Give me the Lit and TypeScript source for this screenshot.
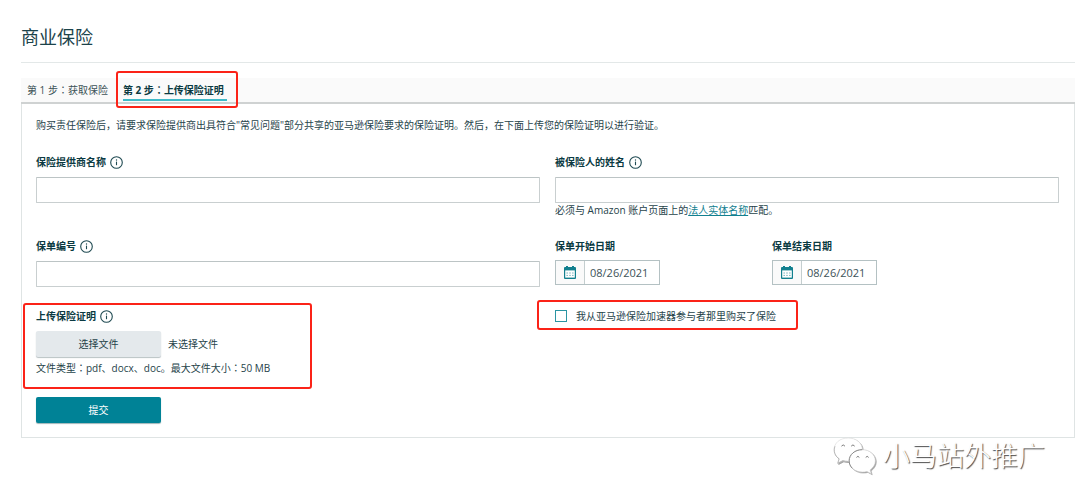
import { LitElement, html, css, svg } from "lit";
import { customElement, property, query, state } from "lit/decorators.js";

@customElement("info-icon")
class InfoIcon extends LitElement {
  static styles = css`
    :host { display: inline-flex; }
    .icon { display: block; width: 13px; height: 13px; }
  `;
  render() {
    return html`<svg class="icon" viewBox="0 0 13 13" fill="none" aria-hidden="true">
      <circle cx="6.5" cy="6.5" r="5.8" stroke="#1f4a52" stroke-width="1.1" />
      <circle cx="6.5" cy="4" r="0.7" fill="#1f4a52" />
      <path d="M6.5 5.6V9.2" stroke="#1f4a52" stroke-width="1.1" />
    </svg>`;
  }
}

@customElement("date-field")
class DateField extends LitElement {
  @property() label = "";
  @property() value = "";

  static styles = css`
    :host { display: block; }
    .label { display: block; height: 18px; line-height: 18px; margin-bottom: 5px; font-weight: 700; color: #0b3a42; }
    .box { display: flex; width: 105px; height: 25px; box-sizing: border-box; border: 1px solid #b4c1c3; background: #fff; }
    .pick { flex: none; width: 29px; padding: 0; border: 0; border-right: 1px solid #c4cecf; background: #fafafa; display: grid; place-items: center; }
    .icon { width: 12px; height: 13px; display: block; }
    .text { flex: 1; min-width: 0; border: 0; padding: 0 5px; background: none; font: inherit; font-size: 11px; color: #3c5257; outline: none; }
  `;
  render() {
    return html`
      <label class="label" for="date">${this.label}</label>
      <div class="box">
        <button class="pick" type="button" aria-label=${this.label}>
          <svg class="icon" viewBox="0 0 12 13" aria-hidden="true">
            <path d="M2 0h2v1h4V0h2v1h1a1 1 0 0 1 1 1v10a1 1 0 0 1-1 1H1a1 1 0 0 1-1-1V2a1 1 0 0 1 1-1h1z" fill="#12808f" />
            <rect x="1.2" y="4.4" width="9.6" height="7.2" fill="#fff" />
            <path d="M2.4 7h1.6M5.2 7h1.6M8 7h1.6M2.4 9.4h1.6M5.2 9.4h1.6M8 9.4h1.6" stroke="#7db9c1" stroke-width="1" />
          </svg>
        </button>
        <input class="text" id="date" type="text" .value=${this.value} />
      </div>`;
  }
}

@customElement("app-root")
class AppRoot extends LitElement {
  @state() private step = 2;
  @state() private fileName = "未选择文件";
  @query(".file") private fileInput!: HTMLInputElement;

  static styles = css`
    :host {
      display: block;
      position: relative;
      padding: 24px 5px 65px 21px;
      background: #fff;
      color: #26434a;
      font-family: "Open Sans", "Noto Sans CJK SC", sans-serif;
      font-size: 10px;
      line-height: 16px;
    }
    .title { margin: 0; padding-bottom: 12px; border-bottom: 1px solid #e3e8e8; font-size: 18px; line-height: 26px; font-weight: 400; color: #1c434b; }
    .tabs { display: flex; gap: 15px; margin-top: 15px; padding: 0 6px; height: 24px; background: #fafafa; border-bottom: 2px solid #cfd2d2; }
    .tab { position: relative; height: 24px; padding: 0; border: 0; background: none; font: inherit; color: #3c5257; white-space: nowrap; }
    .tab.active { padding-right: 3px; font-weight: 700; color: #0b3a42; }
    .tab.active::before { content: ""; position: absolute; left: 0; right: 0; bottom: 1px; height: 2px; background: #3dbac8; }
    .mid { font-family: "Noto Sans CJK TC", sans-serif; }
    .marked { position: relative; }
    .marked::after { content: ""; position: absolute; border: 2px solid #fb2318; border-radius: 3px; pointer-events: none; }
    .tab.marked::after { inset: -7px -11px -6px -7px; }
    .upload.marked::after { inset: -4px 228px -14px -13px; }
    .agree.marked::after { inset: -7px -22px -6px -18px; }
    .panel { border: 1px solid #dfe4e4; border-top: 0; padding: 13px 15px 14px 14px; }
    .intro { margin: 0 0 20px; }
    .grid { display: grid; grid-template-columns: 1fr 1fr; column-gap: 15px; row-gap: 20px; align-items: start; }
    .label { display: flex; align-items: center; gap: 4px; height: 18px; margin-bottom: 6px; font-weight: 700; color: #0b3a42; }
    .input { display: block; width: 100%; height: 26px; box-sizing: border-box; border: 1px solid #c9cfd0; border-top-color: #bcc4c5; border-radius: 1px; padding: 0 6px; background: #fff; font: inherit; color: inherit; outline: none; }
    .hint { margin: 0; line-height: 14px; }
    .link { color: #12808f; text-decoration: underline; }
    .dates { display: grid; grid-template-columns: 202px 1fr; column-gap: 15px; }
    .picker { display: flex; align-items: center; gap: 7px; margin-bottom: 4px; }
    .btn { width: 125px; height: 26px; padding: 0; border: 0; border-radius: 2px; font: inherit; }
    .choose { background: #e4e9ec; color: #26434a; box-shadow: 0 1px 1px #b9c2c4; }
    .submit { display: block; margin-top: 22px; background: #008296; color: #fff; box-shadow: 0 1px 1px #9fb5b8; }
    .agree { display: inline-flex; align-items: center; gap: 9px; width: max-content; height: 17px; }
    .check { appearance: none; width: 12px; height: 12px; margin: 0; border: 1px solid #2b95a3; background: #fff; }
    .check:checked { background: #2b95a3; }
    .brand { position: absolute; right: 35px; bottom: 28px; display: flex; align-items: center; gap: 7px; font-size: 27px; line-height: 38px; font-weight: 300; color: #fff; text-shadow: 1px 1px 1px #444; pointer-events: none; }
    .chat { display: block; width: 43px; height: 38px; overflow: visible; filter: drop-shadow(1px 1px 0 #a4a4a4); }
  `;

  private onFile() {
    this.fileName = this.fileInput.files?.[0]?.name ?? "未选择文件";
  }

  private tab(n: number, name: string) {
    const on = this.step === n;
    return html`<button class="tab ${on ? "active" : ""} ${n === 2 ? "marked" : ""}" role="tab" aria-selected=${on}
      @click=${() => (this.step = n)}>第 ${n} 步<span class="mid">：</span>${name}</button>`;
  }

  render() {
    return html`
      <h1 class="title">商业保险</h1>
      <div class="tabs" role="tablist">${this.tab(1, "获取保险")}${this.tab(2, "上传保险证明")}</div>
      <form class="panel" @submit=${(e: Event) => e.preventDefault()}>
        <p class="intro">购买责任保险后，请要求保险提供商出具符合"常见问题"部分共享的亚马逊保险要求的保险证明。然后，在下面上传您的保险证明以进行验证。</p>
        <div class="grid">
          <div>
            <label class="label" for="provider">保险提供商名称 <info-icon></info-icon></label>
            <input class="input" id="provider" type="text" />
          </div>
          <div>
            <label class="label" for="insured">被保险人的姓名 <info-icon></info-icon></label>
            <input class="input" id="insured" type="text" />
            <p class="hint">必须与 Amazon 账户页面上的<a class="link" href="#">法人实体名称</a>匹配。</p>
          </div>
          <div>
            <label class="label" for="policy">保单编号 <info-icon></info-icon></label>
            <input class="input" id="policy" type="text" />
          </div>
          <div class="dates">
            <date-field label="保单开始日期" value="08/26/2021"></date-field>
            <date-field label="保单结束日期" value="08/26/2021"></date-field>
          </div>
          <div class="upload marked">
            <label class="label" for="file">上传保险证明 <info-icon></info-icon></label>
            <div class="picker">
              <button class="btn choose" type="button" @click=${() => this.fileInput.click()}>选择文件</button>
              <span>${this.fileName}</span>
              <input class="file" id="file" type="file" accept=".pdf,.docx,.doc" hidden @change=${this.onFile} />
            </div>
            <p class="hint">文件类型<span class="mid">：</span>pdf、docx、doc。最大文件大小<span class="mid">：</span>50 MB</p>
          </div>
          <label class="agree marked"><input class="check" type="checkbox" />我从亚马逊保险加速器参与者那里购买了保险</label>
        </div>
        <button class="btn submit" type="submit">提交</button>
      </form>
      <div class="brand">
        <svg class="chat" viewBox="0 0 44 39" aria-hidden="true">
          ${svg`
          <path d="M15.5 1C7 1 1 6.300 1 13c0 4 2 7.200 5.200 9.400L4.800 27l5.200-2.700c1.800.5 3.600.8 5.500.8C24 25 30 19.700 30 13S24 1 15.500 1z" fill="#fff" stroke="#ddd" stroke-width=".7"/>
          <path d="M2 9.500c-2 5 0 10 4.200 12.900L4.800 27l5.200-2.700c1.800.5 3.600.8 5.500.8" fill="none" stroke="#aaa" stroke-width=".8"/>
          <path d="M30 13c-7.600 0-13.500 5-13.500 11.500S22.400 36 30 36c1.700 0 3.300-.2 4.800-.7l4.400 2.500-1.200-4c3.300-2.200 5.400-5.500 5.400-9.300C43.400 18 37.600 13 30 13z" fill="#fff" stroke="#ccc" stroke-width=".6"/>
          <path d="M30 13c-7.600 0-13.500 5-13.500 11.500 0 3 1.200 5.600 3.300 7.600" fill="none" stroke="#888" stroke-width="1"/>
          <path d="M8.600 9.400q1.800-2.600 3.600 0M18.600 9.400q1.800-2.600 3.600 0M24 21q1.500-2.400 3 0M33.500 21q1.500-2.400 3 0" fill="none" stroke="#777" stroke-width="1"/>`}
        </svg>
        <span>小马站外推广</span>
      </div>`;
  }
}
